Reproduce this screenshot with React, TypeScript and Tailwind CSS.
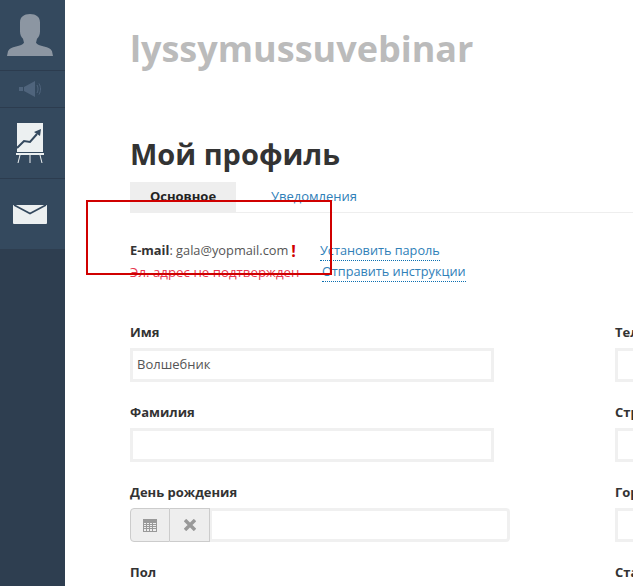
import React from 'react';

const font = 'font-["Open_Sans","Liberation_Sans",sans-serif]';

function Field({ label, value, className }: { label: string; value?: string; className: string }) {
  return (
    <div className={`h-[80px] shrink-0 ${className}`}>
      <div className="h-[17px] text-[13px] leading-[17px] font-bold text-[#333]">{label}</div>
      <div className="mt-[7px] h-[34px] border-[3px] border-[#f0f0f0] bg-white pl-[4px] text-[13px] leading-[27px] text-[#555]">
        {value}
      </div>
    </div>
  );
}

function Sidebar() {
  return (
    <div className="flex w-[65px] shrink-0 flex-col bg-[#2e3e50]">
      <div className="flex h-[71px] items-start justify-center border-b border-[#2c3c4f] bg-[#34495e] pt-[13px] pr-[5px]">
        <svg width="46" height="44" viewBox="0 0 46 46" preserveAspectRatio="none">
          <path
            fill="#8c96a2"
            d="M23 1c6 0 10 3 10 9v9c0 3-1 6-3 8l-1 4c1 2 4 3 8 4 4 1 7 2 8 5l1 5H0l1-5c1-3 4-4 8-5 4-1 7-2 8-4l-1-4c-2-2-3-5-3-8v-9c0-6 4-9 10-9z"
          />
        </svg>
      </div>
      <div className="flex h-[37px] items-center justify-center border-b border-[#2c3c4f] bg-[#34495e] pr-[5px]">
        <svg width="22" height="16" viewBox="0 0 22 16">
          <path fill="#4f647c" d="M0 6h4v4H0zM5 6l11-6v16L5 10z" />
          <path fill="none" stroke="#4f647c" d="M18 4c1.400 2.500 1.400 5.500 0 8M20 2.500c2 3.500 2 7.500 0 11" />
        </svg>
      </div>
      <div className="flex h-[71px] items-center justify-center border-b border-[#2c3c4f] bg-[#34495e] pr-[5px]">
        <svg width="28" height="40" viewBox="0 0 28 40">
          <path fill="#ecf0f1" d="M1 0h26v29H1z" />
          <path fill="none" stroke="#34495e" strokeWidth="2" d="M1 25l7-7 6 1 7-8" />
          <path fill="#34495e" d="M18 9l7-3-1 7z" />
          <path fill="#ecf0f1" d="M0 30h28v2H0z" />
          <path fill="none" stroke="#ecf0f1" d="M4 32l-2 8M14 32v8M24 32l2 8" />
        </svg>
      </div>
      <div className="flex h-[70px] items-center justify-center bg-[#34495e] pr-[5px]">
        <svg width="34" height="20" viewBox="0 0 34 20">
          <path fill="#ecf0f1" d="M0 1h34v18a1 1 0 0 1-1 1H1a1 1 0 0 1-1-1z" />
          <path fill="none" stroke="#34495e" strokeWidth="1.600" d="M1 1l16 8.500L33 1" />
        </svg>
      </div>
      <div className="flex-1" />
    </div>
  );
}

export default function App() {
  return (
    <div className={`relative flex h-[586px] w-[633px] overflow-hidden bg-white ${font}`}>
      <Sidebar />

      <div className="flex-1 pl-[65px]">
        <div className="h-[94px] pt-[25px] text-[36px] leading-[48px] font-bold whitespace-nowrap text-[#bbbbbb]">
          lyssymussuvebinar
        </div>

        <h1 className="mt-[42px] text-[29px] leading-[36px] font-bold text-[#333]">Мой профиль</h1>

        <div className="mt-[10px] flex h-[31px] w-[503px] border-b border-[#eeeeee]">
          <div className="h-[31px] w-[106px] bg-[#eeeeee] pt-[6px] text-center text-[13px] leading-[17px] font-bold text-[#222]">
            Основное
          </div>
          <div className="pt-[6px] pl-[35px] text-[13px] leading-[17px] text-[#2f80b8]">Уведомления</div>
        </div>

        <div className="mt-[28px] flex">
          <div className="w-[190px] shrink-0 text-[12.8px]">
            <div className="flex h-[20px] items-center whitespace-nowrap text-[#555]">
              <b className="text-[#333]">E-mail</b>: gala@yopmail.com
              <span className="ml-[3px] text-[16px] font-bold text-[#d00000]">!</span>
            </div>
            <div className="mt-[1px] h-[20px] text-[13.3px] leading-[20px] whitespace-nowrap text-[#e8364f]">Эл. адрес не подтвержден</div>
          </div>
          <div className="text-[12.7px] whitespace-nowrap text-[#2f80b8]">
            <div className="h-[20px] w-fit border-b border-dotted border-[#0b6fb0] leading-[19px]">Установить пароль</div>
            <div className="mt-[1px] ml-[2px] h-[20px] w-fit border-b border-dotted border-[#0b6fb0] leading-[19px]">Отправить инструкции</div>
          </div>
        </div>

        <div className="mt-[42px] flex w-[503px] justify-between">
          <div className="w-[364px]">
            <Field label="Имя" value="Волшебник" className="w-full" />
            <Field label="Фамилия" className="w-full" />
            <div className="h-[80px]">
              <div className="h-[17px] text-[13px] leading-[17px] font-bold text-[#333]">День рождения</div>
              <div className="mt-[7px] flex h-[34px] w-[380px]">
                <div className="flex w-[40px] items-center justify-center rounded-l-[4px] border border-[#cccccc] bg-[#eeeeee]">
                  <svg width="14" height="14" viewBox="0 0 14 14">
                    <path fill="#999" d="M0 1h14v13H0z" />
                    <path fill="#eee" d="M1 5h12v8H1z" />
                    <path fill="#999" d="M1 6h12v1H1zM1 8h12v1H1zM1 10h12v1H1zM3 5h1v8H3zM6 5h1v8H6zM9 5h1v8H9z" />
                  </svg>
                </div>
                <div className="flex w-[40px] items-center justify-center border-y border-r border-[#cccccc] bg-[#eeeeee]">
                  <svg width="12" height="12" viewBox="0 0 12 12">
                    <path stroke="#999" strokeWidth="3.400" d="M1 1l10 10M11 1L1 11" />
                  </svg>
                </div>
                <div className="flex-1 rounded-r-[4px] border-[3px] border-l-[2px] border-[#f0f0f0] bg-white" />
              </div>
            </div>
            <div className="h-[17px] text-[13px] leading-[17px] font-bold text-[#333]">Пол</div>
          </div>
          <div className="w-[18px] shrink-0 overflow-visible">
            <Field label="Телефон" className="w-[200px]" />
            <Field label="Страна" className="w-[200px]" />
            <Field label="Город" className="w-[200px]" />
            <div className="h-[17px] w-[200px] text-[13px] leading-[17px] font-bold text-[#333]">Статус</div>
          </div>
        </div>
      </div>

      {/* red annotation frame */}
      <div className="absolute top-[200px] left-[86px] h-[75px] w-[246px] border-2 border-[#d00000]" />
    </div>
  );
}
